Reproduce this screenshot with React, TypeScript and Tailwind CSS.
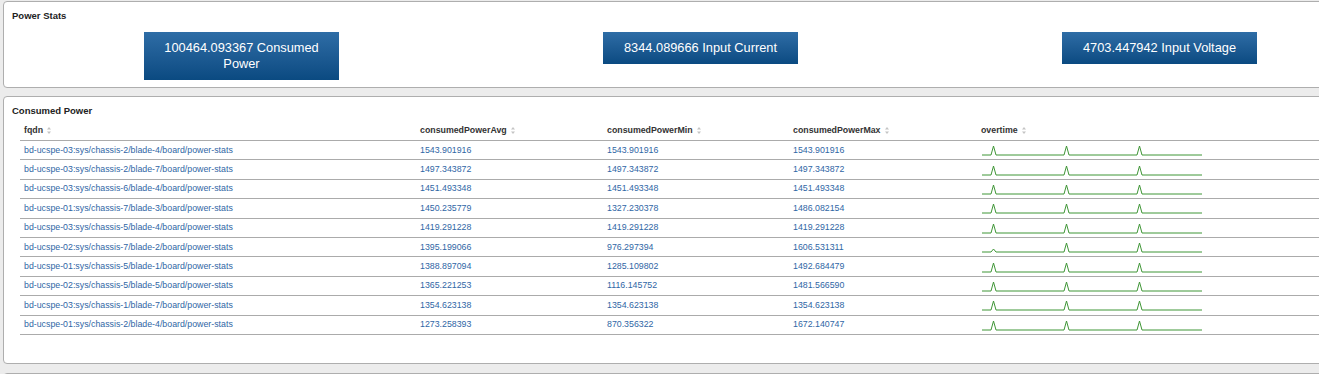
const stats = [
  { value: "100464.093367", label: "Consumed Power" },
  { value: "8344.089666", label: "Input Current" },
  { value: "4703.447942", label: "Input Voltage" },
]

const rows = [
  ["bd-ucspe-03:sys/chassis-2/blade-4/board/power-stats", "1543.901916", "1543.901916", "1543.901916"],
  ["bd-ucspe-03:sys/chassis-2/blade-7/board/power-stats", "1497.343872", "1497.343872", "1497.343872"],
  ["bd-ucspe-03:sys/chassis-6/blade-4/board/power-stats", "1451.493348", "1451.493348", "1451.493348"],
  ["bd-ucspe-01:sys/chassis-7/blade-3/board/power-stats", "1450.235779", "1327.230378", "1486.082154"],
  ["bd-ucspe-03:sys/chassis-5/blade-4/board/power-stats", "1419.291228", "1419.291228", "1419.291228"],
  ["bd-ucspe-02:sys/chassis-7/blade-2/board/power-stats", "1395.199066", "976.297394", "1606.531311"],
  ["bd-ucspe-01:sys/chassis-5/blade-1/board/power-stats", "1388.897094", "1285.109802", "1492.684479"],
  ["bd-ucspe-02:sys/chassis-5/blade-5/board/power-stats", "1365.221253", "1116.145752", "1481.566590"],
  ["bd-ucspe-03:sys/chassis-1/blade-7/board/power-stats", "1354.623138", "1354.623138", "1354.623138"],
  ["bd-ucspe-01:sys/chassis-2/blade-4/board/power-stats", "1273.258393", "870.356322", "1672.140747"],
]

const columns = [
  { name: "fqdn", width: "w-[396px]" },
  { name: "consumedPowerAvg", width: "w-[187px]" },
  { name: "consumedPowerMin", width: "w-[186px]" },
  { name: "consumedPowerMax", width: "w-[188px]" },
  { name: "overtime", width: "flex-1" },
]

const SortIcon = () => (
  <svg width="4" height="7" viewBox="0 0 4 7" className="ml-[4px] inline-block">
    <path d="M2 0 L4 2.6 L0 2.6 Z M2 7 L4 4.4 L0 4.4 Z" fill="#c4c4c4" />
  </svg>
)

const Spark = ({ low }: { low?: boolean }) => {
  const p1 = low ? 8 : 2
  return (
    <svg width="222" height="12" viewBox="0 0 222 12" className="block">
      <path
        d={`M0 11 L9 11 L11.5 ${p1} L14 11 L82 11 L84.5 2 L87 11 L155 11 L157.5 2 L160 11 L220 11`}
        fill="none"
        stroke="#3f9636"
        strokeWidth="1"
      />
    </svg>
  )
}

const App = () => {
  return (
    <div className="h-[374px] w-full overflow-hidden bg-[#ececec] font-['Liberation_Sans',Arial,sans-serif]">
      <div className="w-[1398px] pl-[3px] pt-[1px]">
        {/* Power Stats */}
        <div className="rounded-[4px] border border-[#aeaeae] bg-white px-[8px] pt-[8px] pb-[7px]">
          <h2 className="text-[9.5px] font-bold leading-[11px] text-[#222]">Power Stats</h2>
          <div className="mt-[11px] grid grid-cols-3 items-start">
            {stats.map((s) => (
              <div key={s.label} className="flex justify-center">
                <div className="w-[195px] bg-gradient-to-b from-[#2e6da6] to-[#0a4a81] px-[10px] py-[8px] text-center text-[12.8px] leading-[16px] text-white">
                  {`${s.value} ${s.label}`}
                </div>
              </div>
            ))}
          </div>
        </div>

        {/* Consumed Power */}
        <div className="mt-[8px] rounded-[4px] border border-[#aeaeae] bg-white px-[8px] pt-[8px] pb-[28px]">
          <h2 className="text-[9.5px] font-bold leading-[11px] text-[#222]">Consumed Power</h2>
          <div className="mt-[5px] pl-[8px] pr-[8px] text-[8.8px]">
            <div className="flex h-[20px] items-center border-b border-[#ababab] font-bold text-[#333]">
              {columns.map((c) => (
                <div key={c.name} className={`${c.width} flex items-center pl-[4px]`}>
                  {c.name}
                  <SortIcon />
                </div>
              ))}
            </div>
            {rows.map((r, i) => (
              <div key={i} className="flex h-[19.4px] items-center border-b border-[#ababab] text-[#2f66a5]">
                <div className="w-[396px] pl-[4px]">{r[0]}</div>
                <div className="w-[187px] pl-[4px]">{r[1]}</div>
                <div className="w-[186px] pl-[4px]">{r[2]}</div>
                <div className="w-[188px] pl-[4px]">{r[3]}</div>
                <div className="flex-1 pl-[5px]">
                  <Spark low={i === 5} />
                </div>
              </div>
            ))}
          </div>
        </div>

        {/* next panel, cut off */}
        <div className="mt-[9px] h-[40px] rounded-[4px] border border-[#aeaeae] bg-white" />
      </div>
    </div>
  )
}

export default App
